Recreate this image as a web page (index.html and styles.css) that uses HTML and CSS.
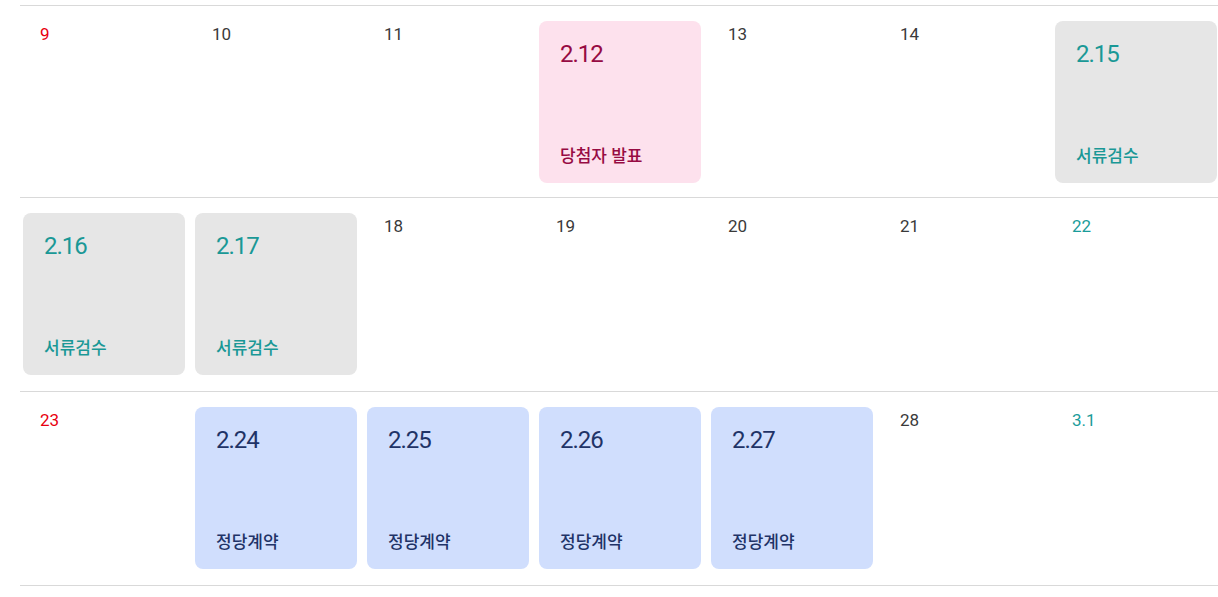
FILE: index.html
```html
<!DOCTYPE html>
<html lang="ko">
<head>
    <meta charset="UTF-8">
    <title>일정 달력</title>
    <link rel="stylesheet" href="styles.css">
</head>
<body>
<div class="calendar">
    <div class="week">
        <div class="day sun">9</div>
        <div class="day">10</div>
        <div class="day">11</div>
        <div class="event pink">
            <span class="event-date">2.12</span>
            <span class="event-name">당첨자 발표</span>
        </div>
        <div class="day">13</div>
        <div class="day">14</div>
        <div class="event gray">
            <span class="event-date">2.15</span>
            <span class="event-name">서류검수</span>
        </div>
    </div>
    <div class="week">
        <div class="event gray">
            <span class="event-date">2.16</span>
            <span class="event-name">서류검수</span>
        </div>
        <div class="event gray">
            <span class="event-date">2.17</span>
            <span class="event-name">서류검수</span>
        </div>
        <div class="day">18</div>
        <div class="day">19</div>
        <div class="day">20</div>
        <div class="day">21</div>
        <div class="day sat">22</div>
    </div>
    <div class="week">
        <div class="day sun">23</div>
        <div class="event blue">
            <span class="event-date">2.24</span>
            <span class="event-name">정당계약</span>
        </div>
        <div class="event blue">
            <span class="event-date">2.25</span>
            <span class="event-name">정당계약</span>
        </div>
        <div class="event blue">
            <span class="event-date">2.26</span>
            <span class="event-name">정당계약</span>
        </div>
        <div class="event blue">
            <span class="event-date">2.27</span>
            <span class="event-name">정당계약</span>
        </div>
        <div class="day">28</div>
        <div class="day sat">3.1</div>
    </div>
</div>
</body>
</html>
```

FILE: styles.css
```css
* {
    margin: 0;
    padding: 0;
    box-sizing: border-box;
}

html, body {
    height: 100%;
    overflow: hidden;
}

body {
    background: #fff;
    font-family: Roboto, "Noto Sans CJK KR", sans-serif;
    color: #3a3a3a;
}

.calendar {
    width: 1204px;
    margin: 5px 0 0 20px;
    border-top: 1px solid #d9d9d9;
}

.week {
    display: grid;
    grid-template-columns: repeat(7, 162px);
    column-gap: 10px;
    padding: 15px 0 16px 3px;
    border-bottom: 1px solid #d9d9d9;
}

.week:first-child {
    padding-bottom: 14px;
}

.day {
    height: 162px;
    padding: 3px 17px;
    font-size: 17px;
    line-height: 20px;
}

.sun {
    color: #e8000f;
}

.sat {
    color: #1a9c9a;
}

.event {
    height: 162px;
    padding: 18px 20px 15px 21px;
    border-radius: 8px;
    display: flex;
    flex-direction: column;
    justify-content: space-between;
}

.event-date {
    font-size: 24px;
    line-height: 31px;
    letter-spacing: -1px;
}

.event-name {
    font-size: 17px;
    line-height: 23px;
    font-weight: 500;
}

.pink {
    background: #fde1ed;
    color: #970b43;
}

.gray {
    background: #e6e6e6;
    color: #1a9896;
}

.blue {
    background: #d0defd;
    color: #1f3367;
}
```
